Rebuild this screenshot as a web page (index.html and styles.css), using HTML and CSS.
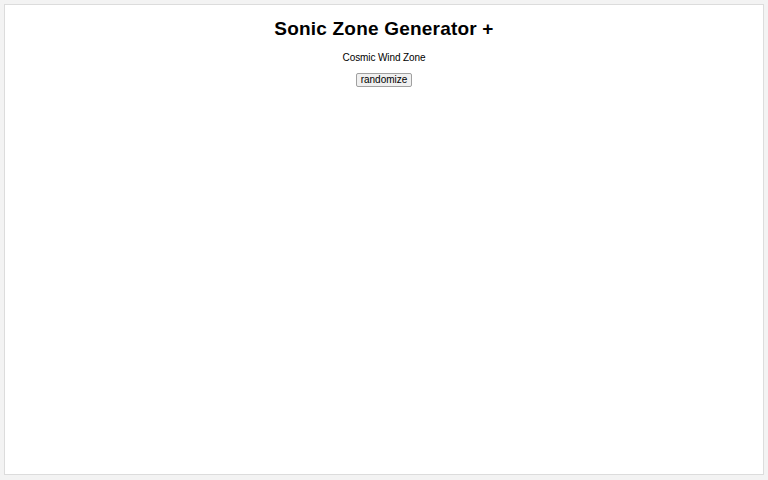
FILE: index.html
```html
<!DOCTYPE html>
<html>
<head>
<meta charset="utf-8">
<link rel="stylesheet" href="styles.css">
</head>
<body>
<div class="frame">
  <h1 class="title">Sonic Zone Generator +</h1>
  <p class="zone">Cosmic Wind Zone</p>
  <button class="btn">randomize</button>
</div>
</body>
</html>
```
FILE: styles.css
```css
html, body { margin: 0; padding: 0; }
body {
  background: #f3f3f3;
  padding: 4px;
  font-family: "Liberation Sans", Arial, sans-serif;
}
.frame {
  background: #fff;
  border: 1px solid #dcdcdc;
  height: 469px;
  display: flex;
  flex-direction: column;
  align-items: center;
}
.title {
  margin: 12px 0 0;
  font-size: 19px;
  font-weight: bold;
  line-height: 23px;
  letter-spacing: 0.2px;
  color: #000;
}
.zone {
  margin: 12px 0 0;
  font-size: 10px;
  line-height: 12px;
  letter-spacing: -0.1px;
  color: #000;
}
.btn {
  margin-top: 9px;
  font-family: "Liberation Sans", Arial, sans-serif;
  font-size: 10px;
  line-height: 12px;
  padding: 0 4px;
  background: #f0f0f0;
  border: 1px solid #a0a0a0;
  border-radius: 2px;
  color: #000;
}
```
